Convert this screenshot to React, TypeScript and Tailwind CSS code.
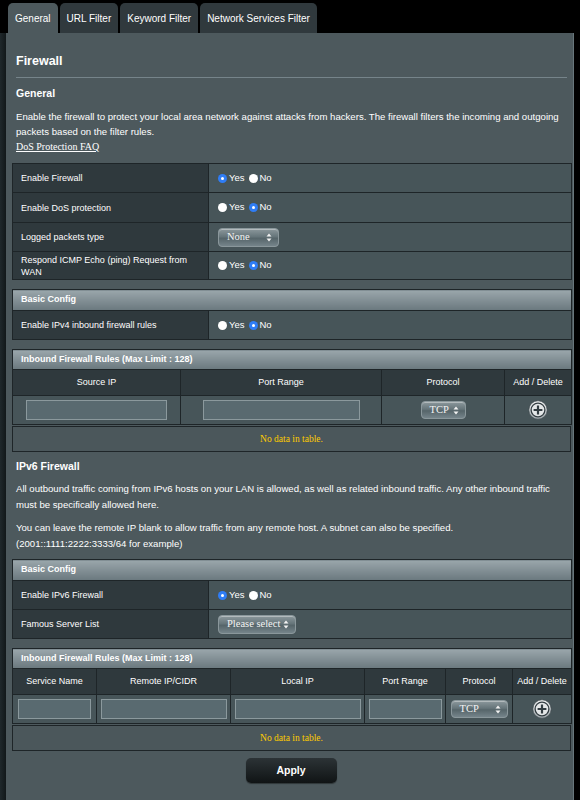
import React from "react";

const FONT = { fontFamily: '"Liberation Sans", Arial, sans-serif' };
const SERIF = { fontFamily: '"Liberation Serif", "Times New Roman", serif' };

function Radio({ checked }: { checked: boolean }) {
  return checked ? (
    <span className="inline-flex h-[9px] w-[9px] items-center justify-center rounded-full bg-[#2f7df6]">
      <span className="h-[3px] w-[3px] rounded-full bg-white" />
    </span>
  ) : (
    <span className="inline-block h-[9px] w-[9px] rounded-full bg-white" />
  );
}

function YesNo({ yes }: { yes: boolean }) {
  return (
    <div className="flex items-center text-[9.5px] text-white">
      <Radio checked={yes} />
      <span className="ml-[2px] mr-[4px]">Yes</span>
      <Radio checked={!yes} />
      <span className="ml-[2px]">No</span>
    </div>
  );
}

function Arrows() {
  return (
    <svg width="6" height="9" viewBox="0 0 6 9" className="shrink-0">
      <path d="M3 0.5 L5.5 3.5 L0.5 3.5 Z" fill="#f2f2f2" />
      <path d="M3 8.5 L5.5 5.5 L0.5 5.5 Z" fill="#f2f2f2" />
    </svg>
  );
}

function Select({ label, w, h = 19 }: { label: string; w: number; h?: number }) {
  return (
    <div
      className="flex items-center justify-between rounded-[4px] border border-[#8a979b] bg-[linear-gradient(to_bottom,#8c989c_0%,#66757a_45%,#56656a_55%,#75848a_100%)] pl-[8px] pr-[6px] shadow-[inset_0_1px_0_rgba(255,255,255,0.35)]"
      style={{ width: w, height: h }}
    >
      <span className="text-[10.5px] leading-none text-[#f4f4f4]" style={SERIF}>
        {label}
      </span>
      <Arrows />
    </div>
  );
}

function Plus({ id }: { id: string }) {
  return (
    <svg width="20" height="20" viewBox="0 0 20 20">
      <defs>
        <linearGradient id={id} x1="0" y1="0" x2="0" y2="1">
          <stop offset="0%" stopColor="#f4f5f5" />
          <stop offset="100%" stopColor="#9da6aa" />
        </linearGradient>
      </defs>
      <circle cx="10" cy="10" r="9.2" fill={`url(#${id})`} stroke="#3b4549" strokeWidth="0.6" />
      <circle cx="10" cy="10" r="6.9" fill="#e4e7e8" stroke="#343e43" strokeWidth="1.3" />
      <path d="M10 5.6 V14.4 M5.6 10 H14.4" stroke="#343e43" strokeWidth="2.2" />
    </svg>
  );
}

function Input({ w }: { w: number }) {
  return <div className="mx-auto h-[20px] border border-[#8b999d] bg-[#596a70]" style={{ width: w }} />;
}

const TH = "bg-[#2f393d] border border-[#1e2528] text-white";
const TD = "bg-[#475559] border border-[#1e2528]";

function HeaderRow({ title, cols, h = 21 }: { title: string; cols: number; h?: number }) {
  return (
    <tr style={{ height: h }}>
      <td
        colSpan={cols}
        className="border border-[#1e2528] bg-[linear-gradient(to_bottom,#9aa6ab,#6a787e)] pl-[8px] text-[9px] font-bold text-white"
      >
        {title}
      </td>
    </tr>
  );
}

function FormRow({ label, children, h = 29 }: { label: React.ReactNode; children: React.ReactNode; h?: number }) {
  return (
    <tr style={{ height: h }}>
      <td className={`${TH} px-[8px] text-[9px] leading-[12px]`}>{label}</td>
      <td className={`${TD} pl-[9px]`}>{children}</td>
    </tr>
  );
}

function FormCols() {
  return (
    <colgroup>
      <col style={{ width: 196 }} />
      <col style={{ width: 363 }} />
    </colgroup>
  );
}

function NoData() {
  return (
    <table className="mt-px w-[559px] border-collapse">
      <tbody>
        <tr className="h-[25px]">
          <td className="border border-[#1e2528] bg-[#4b575b] text-center text-[9.5px] text-[#ffcc00]" style={SERIF}>
            No data in table.
          </td>
        </tr>
      </tbody>
    </table>
  );
}

export default function App() {
  return (
    <div
      className="flex h-[800px] w-[580px] flex-col overflow-hidden bg-[linear-gradient(90deg,#1f282b_0px,#12181a_6px,#000_7px)]"
      style={FONT}
    >
      {/* tabs */}
      <div className="flex h-[33px] shrink-0 items-end gap-[2px] bg-black pl-[8px]">
        {["General", "URL Filter", "Keyword Filter", "Network Services Filter"].map((t, i) => (
          <div
            key={t}
            className={`flex h-[30px] items-center rounded-t-[5px] px-[7px] text-[10px] text-white ${
              i === 0 ? "bg-[#4d595d]" : "bg-[#30393d]"
            }`}
          >
            {t}
          </div>
        ))}
      </div>

      {/* panel */}
      <div className="ml-[6px] w-[568px] flex-1 border-r border-[#68767b] bg-[#4d595d] pl-[6px] pr-[3px]">
        <div className="pl-[4px]">
          <div className="mt-[20px] text-[12.5px] font-bold leading-[16px] text-white">Firewall</div>
          <div className="mt-[8px] mr-[3px] h-px bg-[#76848a]" />
          <div className="mt-[8px] text-[10.5px] font-bold leading-[14px] text-white">General</div>
          <p className="mt-[9px] text-[9.6px] leading-[15px] text-white">
            Enable the firewall to protect your local area network against attacks from hackers. The firewall filters the
            incoming and outgoing packets based on the filter rules.
          </p>
          <div className="text-[10px] leading-[15px] text-white underline" style={SERIF}>
            DoS Protection FAQ
          </div>
        </div>

        {/* table 1 */}
        <table className="mt-[9px] w-[559px] table-fixed border-collapse">
          <FormCols />
          <tbody>
            <FormRow label="Enable Firewall">
              <YesNo yes />
            </FormRow>
            <FormRow label="Enable DoS protection" h={30}>
              <YesNo yes={false} />
            </FormRow>
            <FormRow label="Logged packets type">
              <Select label="None" w={61} />
            </FormRow>
            <FormRow label="Respond ICMP Echo (ping) Request from WAN" h={28}>
              <YesNo yes={false} />
            </FormRow>
          </tbody>
        </table>

        {/* basic config */}
        <table className="mt-[9px] w-[559px] table-fixed border-collapse">
          <FormCols />
          <tbody>
            <HeaderRow title="Basic Config" cols={2} />
            <FormRow label="Enable IPv4 inbound firewall rules">
              <YesNo yes={false} />
            </FormRow>
          </tbody>
        </table>

        {/* inbound rules */}
        <table className="mt-[9px] w-[559px] table-fixed border-collapse">
          <colgroup>
            <col style={{ width: 168 }} />
            <col style={{ width: 201 }} />
            <col style={{ width: 123 }} />
            <col style={{ width: 67 }} />
          </colgroup>
          <tbody>
            <HeaderRow title="Inbound Firewall Rules (Max Limit : 128)" cols={4} h={20} />
            <tr className="h-[26px] text-center text-[9px]">
              <td className={TH}>Source IP</td>
              <td className={TH}>Port Range</td>
              <td className={TH}>Protocol</td>
              <td className={TH}>Add / Delete</td>
            </tr>
            <tr className="h-[29px]">
              <td className={TD}>
                <Input w={141} />
              </td>
              <td className={TD}>
                <Input w={157} />
              </td>
              <td className={TD}>
                <div className="flex justify-center">
                  <Select label="TCP" w={45} h={18} />
                </div>
              </td>
              <td className={TD}>
                <div className="flex justify-center">
                  <Plus id="pg1" />
                </div>
              </td>
            </tr>
          </tbody>
        </table>
        <NoData />

        {/* IPv6 */}
        <div className="pl-[4px]">
          <div className="mt-[7px] text-[10.5px] font-bold leading-[14px] text-white">IPv6 Firewall</div>
          <p className="mt-[8px] text-[9.6px] leading-[16px] text-white">
            All outbound traffic coming from IPv6 hosts on your LAN is allowed, as well as related inbound traffic. Any
            other inbound traffic must be specifically allowed here.
          </p>
          <p className="mt-[7px] text-[9.6px] leading-[16px] text-white">
            You can leave the remote IP blank to allow traffic from any remote host. A subnet can also be specified.
            <br />
            (2001::1111:2222:3333/64 for example)
          </p>
        </div>

        <table className="mt-[7px] w-[559px] table-fixed border-collapse">
          <FormCols />
          <tbody>
            <HeaderRow title="Basic Config" cols={2} />
            <FormRow label="Enable IPv6 Firewall">
              <YesNo yes />
            </FormRow>
            <FormRow label="Famous Server List">
              <Select label="Please select" w={78} />
            </FormRow>
          </tbody>
        </table>

        <table className="mt-[9px] w-[559px] table-fixed border-collapse">
          <colgroup>
            <col style={{ width: 84 }} />
            <col style={{ width: 134 }} />
            <col style={{ width: 134 }} />
            <col style={{ width: 81 }} />
            <col style={{ width: 67 }} />
            <col style={{ width: 59 }} />
          </colgroup>
          <tbody>
            <HeaderRow title="Inbound Firewall Rules (Max Limit : 128)" cols={6} h={20} />
            <tr className="h-[26px] text-center text-[9px]">
              <td className={TH}>Service Name</td>
              <td className={TH}>Remote IP/CIDR</td>
              <td className={TH}>Local IP</td>
              <td className={TH}>Port Range</td>
              <td className={TH}>Protocol</td>
              <td className={TH}>Add / Delete</td>
            </tr>
            <tr className="h-[29px]">
              <td className={TD}>
                <Input w={73} />
              </td>
              <td className={TD}>
                <Input w={126} />
              </td>
              <td className={TD}>
                <Input w={126} />
              </td>
              <td className={TD}>
                <Input w={73} />
              </td>
              <td className={TD}>
                <div className="flex justify-center">
                  <Select label="TCP" w={57} h={18} />
                </div>
              </td>
              <td className={TD}>
                <div className="flex justify-center">
                  <Plus id="pg2" />
                </div>
              </td>
            </tr>
          </tbody>
        </table>
        <NoData />

        <div className="mt-[7px] flex justify-center">
          <button className="h-[25px] w-[91px] rounded-[5px] bg-[linear-gradient(to_bottom,#2c3336,#101415)] text-[10.5px] font-bold text-white shadow-[0_1px_1px_rgba(0,0,0,0.4)]">
            Apply
          </button>
        </div>
      </div>
    </div>
  );
}
